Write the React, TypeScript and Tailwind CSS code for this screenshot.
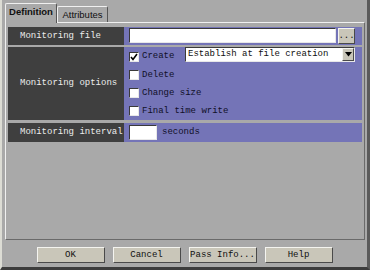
import React from 'react';

const mono = { fontFamily: '"Liberation Mono", "DejaVu Sans Mono", monospace' };

function CheckBox({ checked = false }: { checked?: boolean }) {
  return (
    <div className="w-[10px] h-[10px] bg-white border border-t-[#3a3a3a] border-l-[#3a3a3a] border-b-[#e8e8e8] border-r-[#e8e8e8] flex items-center justify-center shrink-0">
      {checked && (
        <svg width="8" height="8" viewBox="0 0 8 8">
          <path d="M1 4 L3 6.5 L7 1" stroke="#000" strokeWidth="1.6" fill="none" />
        </svg>
      )}
    </div>
  );
}

function OptionLine({ label, checked, h }: { label: string; checked?: boolean; h: string }) {
  return (
    <div className={`flex items-center ${h} pl-[5px]`}>
      <CheckBox checked={checked} />
      <span className="ml-[3px] text-[9px] text-[#101028] leading-none" style={mono}>
        {label}
      </span>
    </div>
  );
}

function Btn({ label }: { label: string }) {
  return (
    <div
      className="w-[68px] h-[16px] bg-[#c9c6b9] border border-t-[#f4f4f0] border-l-[#f4f4f0] border-b-[#4a4a4a] border-r-[#4a4a4a] flex items-center justify-center text-[9px] text-[#101010] leading-none"
      style={mono}
    >
      {label}
    </div>
  );
}

export default function App() {
  return (
    <div className="w-[370px] h-[270px] bg-[#a9a9a9] flex flex-col border-l-2 border-l-[#dcdcd4] border-r-[3px] border-r-[#5a5a5a] border-b-[3px] border-b-[#3c3c3c] overflow-hidden">
      {/* tabs */}
      <div className="flex items-end h-[22px] pl-[3px] relative z-10">
        <div className="h-[20px] -mb-px w-[52px] bg-[#a9a9a9] border-t border-l border-r border-t-[#f0f0f0] border-l-[#f0f0f0] border-r-[#555] rounded-t-[2px] flex items-start justify-center pt-[3px]">
          <span className="text-[9.5px] font-bold text-[#101010] leading-none" style={{ fontFamily: '"Liberation Sans", Arial, sans-serif' }}>
            Definition
          </span>
        </div>
        <div className="h-[16px] w-[51px] bg-[#a9a9a9] border-t border-l border-r border-t-[#f0f0f0] border-l-[#f0f0f0] border-r-[#555] rounded-t-[2px] flex items-start justify-center pt-[3px]">
          <span className="text-[9.5px] text-[#101010] leading-none" style={{ fontFamily: '"Liberation Sans", Arial, sans-serif' }}>
            Attributes
          </span>
        </div>
      </div>

      {/* panel */}
      <div className="ml-[3px] mr-[2px] h-[218px] border border-t-[#f0f0f0] border-l-[#f0f0f0] border-b-[#6a6a6a] border-r-[#6a6a6a] pt-[4px] px-[2px] flex flex-col">
        {/* monitoring file */}
        <div className="flex h-[18px]">
          <div className="w-[116px] bg-[#3f3f3f] flex items-center pl-[12px] text-[9px] text-[#ececec] leading-none" style={mono}>
            Monitoring file
          </div>
          <div className="flex-1 bg-[#7474b7] flex items-start pt-[1px] pl-[5px]">
            <div className="w-[207px] h-[15px] bg-white border border-t-[#3a3a3a] border-l-[#3a3a3a] border-b-[#e8e8e8] border-r-[#e8e8e8]" />
            <div
              className="ml-[2px] w-[17px] h-[16px] bg-[#c9c6b9] border border-t-[#f4f4f0] border-l-[#f4f4f0] border-b-[#4a4a4a] border-r-[#4a4a4a] flex items-center justify-center text-[9px] text-[#101010] leading-none"
              style={mono}
            >
              ...
            </div>
          </div>
        </div>

        {/* monitoring options */}
        <div className="flex h-[73px] mt-[2px]">
          <div className="w-[116px] bg-[#3f3f3f] flex items-center pl-[12px] text-[9px] text-[#ececec] leading-none" style={mono}>
            Monitoring options
          </div>
          <div className="flex-1 bg-[#7474b7] flex flex-col">
            <div className="flex items-start h-[19px]">
              <div className="flex items-center h-[19px] pl-[5px]">
                <CheckBox checked />
                <span className="ml-[3px] text-[9px] text-[#101028] leading-none" style={mono}>
                  Create
                </span>
              </div>
              <div className="ml-auto mr-[7px] w-[170px] h-[15px] bg-white border border-t-[#3a3a3a] border-l-[#3a3a3a] border-b-[#e8e8e8] border-r-[#e8e8e8] flex items-center">
                <span className="pl-[2px] flex-1 text-[9px] text-[#101010] leading-none" style={mono}>
                  Establish at file creation
                </span>
                <div className="w-[12px] h-[13px] bg-[#c9c6b9] border border-t-[#f4f4f0] border-l-[#f4f4f0] border-b-[#4a4a4a] border-r-[#4a4a4a] flex items-center justify-center">
                  <svg width="7" height="5" viewBox="0 0 7 5">
                    <path d="M0 0 H7 L3.5 4.5 Z" fill="#000" />
                  </svg>
                </div>
              </div>
            </div>
            <OptionLine label="Delete" h="h-[18px]" />
            <OptionLine label="Change size" h="h-[18px]" />
            <OptionLine label="Final time write" h="h-[18px]" />
          </div>
        </div>

        {/* monitoring interval */}
        <div className="flex h-[19px] mt-[3px]">
          <div className="w-[116px] bg-[#3f3f3f] flex items-center pl-[12px] text-[9px] text-[#ececec] leading-none" style={mono}>
            Monitoring interval
          </div>
          <div className="flex-1 bg-[#7474b7] flex items-center pl-[5px]">
            <div className="w-[28px] h-[15px] bg-white border border-t-[#3a3a3a] border-l-[#3a3a3a] border-b-[#e8e8e8] border-r-[#e8e8e8]" />
            <span className="ml-[5px] text-[9px] text-[#101028] leading-none" style={mono}>
              seconds
            </span>
          </div>
        </div>
      </div>

      {/* buttons */}
      <div className="flex justify-center gap-[8px] pt-[7px]">
        <Btn label="OK" />
        <Btn label="Cancel" />
        <Btn label="Pass Info..." />
        <Btn label="Help" />
      </div>
    </div>
  );
}
